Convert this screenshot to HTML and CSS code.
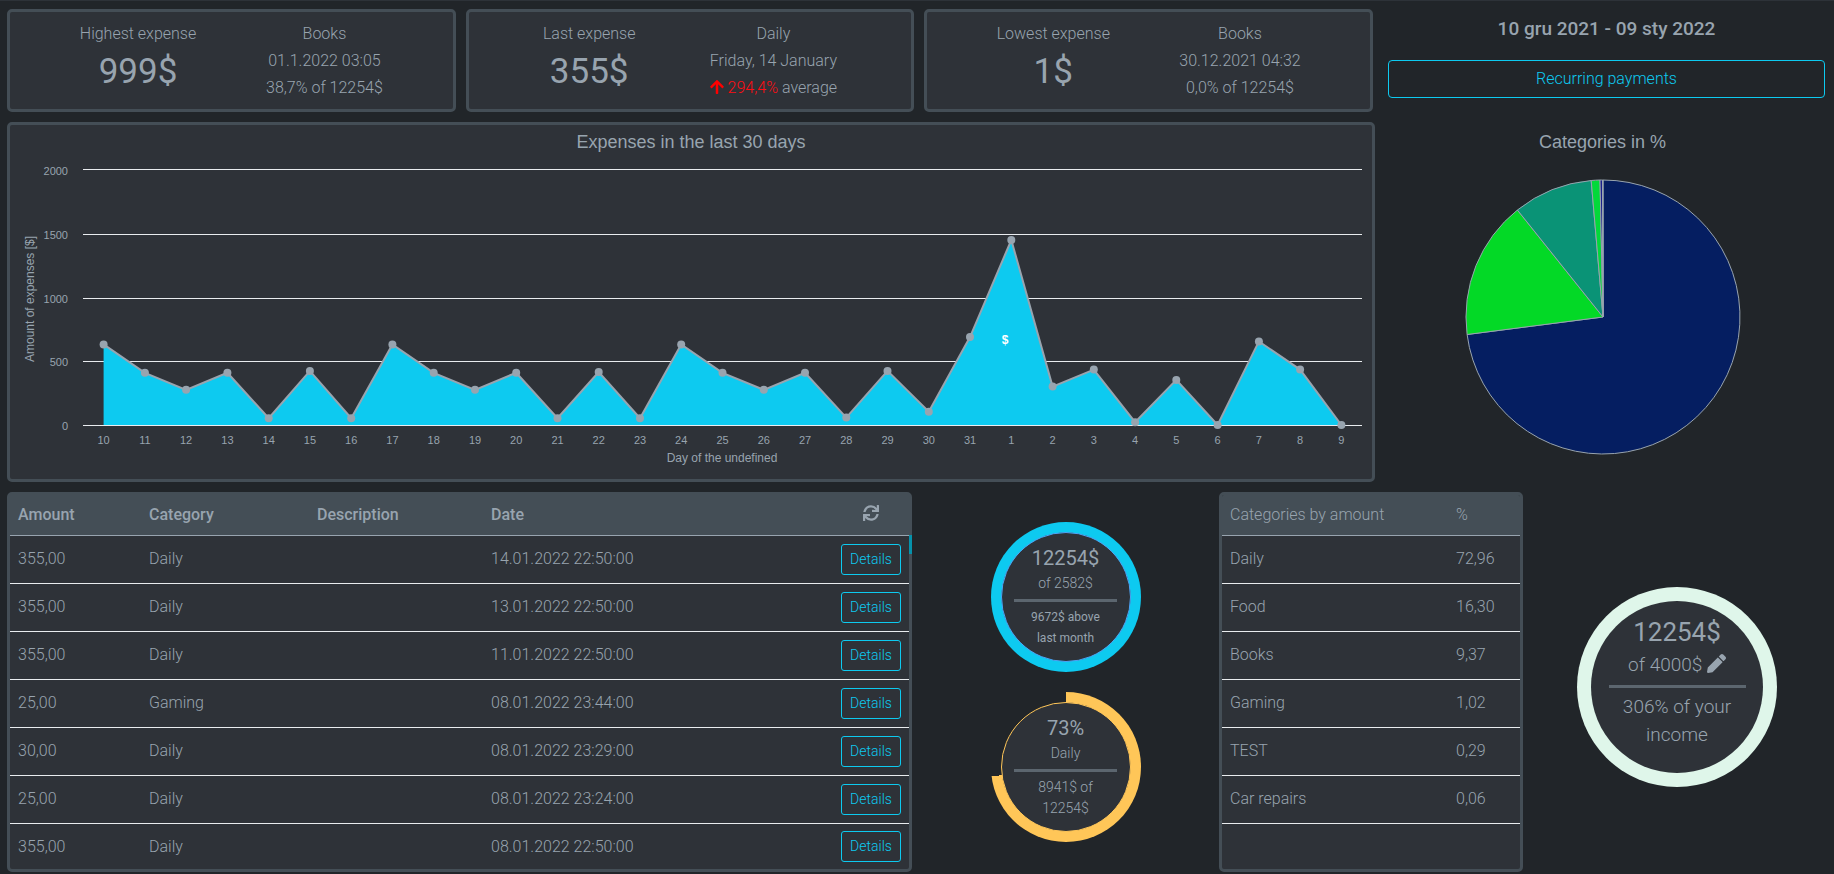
FILE: index.html
```html
<!DOCTYPE html>
<html lang="en">
<head>
<meta charset="utf-8">
<title>Expenses dashboard</title>
<link rel="stylesheet" href="styles.css">
</head>
<body>
<main class="page">
  <div class="top">
    <div class="main-col">
      <div class="stats">
        <section class="panel stat">
          <div class="stat-col"><span>Highest expense</span><strong class="big">999$</strong></div>
          <div class="stat-col"><span>Books</span><span>01.1.2022 03:05</span><span>38,7% of 12254$</span></div>
        </section>
        <section class="panel stat">
          <div class="stat-col"><span>Last expense</span><strong class="big">355$</strong></div>
          <div class="stat-col"><span>Daily</span><span>Friday, 14 January</span><span><span class="up"><svg class="arrow" viewBox="0 0 448 512" aria-hidden="true"><path d="M34.900 289.500l-22.200-22.200c-9.400-9.400-9.400-24.600 0-33.900L207 39c9.400-9.400 24.600-9.400 33.900 0l194.300 194.300c9.400 9.400 9.400 24.600 0 33.900L413 289.400c-9.500 9.500-25 9.300-34.300-.4L264 168.600V456c0 13.300-10.700 24-24 24h-32c-13.300 0-24-10.700-24-24V168.600L69.200 289.100c-9.300 9.800-24.800 10-34.300.4z"/></svg> 294,4%</span> average</span></div>
        </section>
        <section class="panel stat">
          <div class="stat-col"><span>Lowest expense</span><strong class="big">1$</strong></div>
          <div class="stat-col"><span>Books</span><span>30.12.2021 04:32</span><span>0,0% of 12254$</span></div>
        </section>
      </div>
      <section class="panel chart">
        <h2 class="chart-title">Expenses in the last 30 days</h2>
        <svg class="area" viewBox="0 0 1362 319" role="img" aria-label="Expenses in the last 30 days">
          <g class="grid">
            <path d="M73 9.500H1352M73 74.500H1352M73 138.500H1352M73 201.500H1352M73 265.500H1352"/>
          </g>
          <g class="ticks ticks-y">
            <text x="58" y="15">2000</text><text x="58" y="79">1500</text><text x="58" y="143">1000</text><text x="58" y="206">500</text><text x="58" y="270">0</text>
          </g>
          <polygon class="fill" id="fill"/>
          <path class="base" d="M73 265.500H1352"/>
          <polyline class="line" id="line"/>
          <g class="dots" id="dots"></g>
          <g class="ticks" id="days"></g>
          <text class="mark" x="995" y="184">$</text>
          <text class="axis" x="712" y="302">Day of the undefined</text>
          <text class="axis" x="-139" y="24" transform="rotate(-90)">Amount of expenses [$]</text>
        </svg>
      </section>
    </div>
    <aside class="side-col">
      <h1 class="period">10 gru 2021 - 09 sty 2022</h1>
      <button class="btn btn-wide" type="button">Recurring payments</button>
      <section class="pie-box">
        <h2 class="chart-title">Categories in %</h2>
        <svg class="pie" viewBox="-138 -138 276 276" role="img" aria-label="Categories in %">
          <path fill="#051e61" d="M0 0V-137A137 137 0 1 1 -135.900 17.500Z"/>
          <path fill="#03d926" d="M0 0L-135.900 17.500A137 137 0 0 1 -85.600 -107Z"/>
          <path fill="#0a9376" d="M0 0L-85.600 -107A137 137 0 0 1 -11.800 -136.500Z"/>
          <path fill="#03d93a" d="M0 0L-11.800 -136.500A137 137 0 0 1 -3 -137Z"/>
          <path fill="#1a1f8c" d="M0 0L-3 -137A137 137 0 0 1 -.500 -137Z"/>
          <path fill="#98a4af" d="M0 0L-.500 -137H0Z"/>
        </svg>
      </section>
    </aside>
  </div>

  <div class="bottom">
    <section class="panel list">
      <table class="table">
        <colgroup><col class="c-amount"><col class="c-category"><col class="c-desc"><col><col class="c-action"></colgroup>
        <thead><tr><th>Amount</th><th>Category</th><th>Description</th><th>Date</th><th class="action"><button class="icon-btn" type="button" aria-label="Refresh"><svg class="refresh" viewBox="0 0 512 512" aria-hidden="true"><path d="M440.650 12.570l4 82.770A247.160 247.160 0 0 0 255.830 8C134.730 8 33.910 94.920 12.290 209.820A12 12 0 0 0 24.090 224h49.050a12 12 0 0 0 11.670-9.260 175.910 175.910 0 0 1 317-56.940l-101.460-4.860a12 12 0 0 0-12.570 12v47.410a12 12 0 0 0 12 12H500a12 12 0 0 0 12-12V12a12 12 0 0 0-12-12h-47.370a12 12 0 0 0-11.980 12.570zM255.830 432a175.610 175.610 0 0 1-146-77.800l101.800 4.870a12 12 0 0 0 12.570-12v-47.400a12 12 0 0 0-12-12H12a12 12 0 0 0-12 12V500a12 12 0 0 0 12 12h47.350a12 12 0 0 0 12-12.600l-4.150-82.570A247.170 247.170 0 0 0 255.830 504c121.110 0 221.930-86.920 243.550-201.820a12 12 0 0 0-11.800-14.180h-49.050a12 12 0 0 0-11.670 9.260A175.860 175.860 0 0 1 255.830 432z"/></svg></button></th></tr></thead>
        <tbody>
          <tr><td>355,00</td><td>Daily</td><td></td><td>14.01.2022 22:50:00</td><td class="action"><button class="btn" type="button">Details</button></td></tr>
          <tr><td>355,00</td><td>Daily</td><td></td><td>13.01.2022 22:50:00</td><td class="action"><button class="btn" type="button">Details</button></td></tr>
          <tr><td>355,00</td><td>Daily</td><td></td><td>11.01.2022 22:50:00</td><td class="action"><button class="btn" type="button">Details</button></td></tr>
          <tr><td>25,00</td><td>Gaming</td><td></td><td>08.01.2022 23:44:00</td><td class="action"><button class="btn" type="button">Details</button></td></tr>
          <tr><td>30,00</td><td>Daily</td><td></td><td>08.01.2022 23:29:00</td><td class="action"><button class="btn" type="button">Details</button></td></tr>
          <tr><td>25,00</td><td>Daily</td><td></td><td>08.01.2022 23:24:00</td><td class="action"><button class="btn" type="button">Details</button></td></tr>
          <tr><td>355,00</td><td>Daily</td><td></td><td>08.01.2022 22:50:00</td><td class="action"><button class="btn" type="button">Details</button></td></tr>
        </tbody>
      </table>
      <span class="thumb"></span>
    </section>

    <div class="rings">
      <div class="ring ring-cyan"><div class="disc">
        <strong class="ring-value">12254$</strong><span class="ring-sub">of 2582$</span>
        <hr class="rule"><p class="ring-note small">9672$ above<br>last month</p>
      </div></div>
      <div class="ring ring-yellow"><div class="disc">
        <strong class="ring-value">73%</strong><span class="ring-sub">Daily</span>
        <hr class="rule"><p class="ring-note">8941$ of<br>12254$</p>
      </div></div>
    </div>

    <section class="panel cats">
      <table class="table">
        <colgroup><col><col class="c-percent"></colgroup>
        <thead><tr><th class="light">Categories by amount</th><th class="light">%</th></tr></thead>
        <tbody>
          <tr><td>Daily</td><td>72,96</td></tr>
          <tr><td>Food</td><td>16,30</td></tr>
          <tr><td>Books</td><td>9,37</td></tr>
          <tr><td>Gaming</td><td>1,02</td></tr>
          <tr><td>TEST</td><td>0,29</td></tr>
          <tr><td>Car repairs</td><td>0,06</td></tr>
        </tbody>
      </table>
    </section>

    <div class="rings income">
      <div class="ring ring-mint"><div class="disc">
        <strong class="ring-value">12254$</strong>
        <span class="ring-sub">of 4000$ <button class="icon-btn" type="button" aria-label="Edit income"><svg class="pencil" viewBox="0 0 512 512" aria-hidden="true"><path d="M497.900 142.100l-46.100 46.100c-4.700 4.700-12.300 4.700-17 0l-111-111c-4.700-4.700-4.700-12.300 0-17l46.100-46.100c18.700-18.700 49.100-18.700 67.900 0l60.100 60.100c18.800 18.700 18.800 49.100 0 67.900zM284.200 99.800L21.600 362.400.4 483.900c-2.900 16.400 11.400 30.600 27.800 27.800l121.500-21.300 262.600-262.600c4.700-4.700 4.700-12.300 0-17l-111-111c-4.800-4.700-12.400-4.700-17.100 0z"/></svg></button></span>
        <hr class="rule"><p class="ring-note">306% of your<br>income</p>
      </div></div>
    </div>
  </div>
</main>
<script src="chart.js"></script>
</body>
</html>
```
FILE: chart.js
```js
const expenses = [
  [10, 630], [11, 408], [12, 275], [13, 408], [14, 53], [15, 423], [16, 53], [17, 630],
  [18, 408], [19, 275], [20, 408], [21, 53], [22, 413], [23, 53], [24, 630], [25, 408],
  [26, 275], [27, 408], [28, 58], [29, 423], [30, 104], [31, 687], [1, 1445], [2, 300],
  [3, 433], [4, 22], [5, 352], [6, 0], [7, 653], [8, 433], [9, 0]
];
const left = 73, right = 1352, base = 265, top0 = 9, max = 2000;
const step = (right - left) / expenses.length;
const points = expenses.map(([, v], i) => [
  left + step * (i + 0.5),
  base - v * (base - top0) / max
]);
const join = list => list.map(p => p.map(n => n.toFixed(1)).join(",")).join(" ");
const first = points[0][0], last = points[points.length - 1][0];

document.getElementById("line").setAttribute("points", join(points));
document.getElementById("fill").setAttribute("points", join([[first, base], ...points, [last, base]]));

const make = (parent, name, attrs, text) => {
  const node = document.createElementNS("http://www.w3.org/2000/svg", name);
  Object.entries(attrs).forEach(([k, v]) => node.setAttribute(k, v));
  if (text !== undefined) node.textContent = text;
  document.getElementById(parent).append(node);
};
points.forEach(([x, y], i) => {
  make("dots", "circle", { cx: x.toFixed(1), cy: y.toFixed(1), r: 4 });
  make("days", "text", { x: x.toFixed(1), y: 284 }, expenses[i][0]);
});
```
FILE: styles.css
```css
* { box-sizing: border-box; }

body {
  margin: 0;
  background: #212529;
  color: #98a4af;
  font: 300 16px/27px Roboto, "Liberation Sans", sans-serif;
}

.page {
  border-top: 1px solid #2d3238;
  padding: 8px 0 2px 7px;
  display: flex;
  flex-direction: column;
  gap: 10px;
}

.panel {
  background: #2e3238;
  border: 3px solid #444e56;
  border-radius: 5px;
}

.top {
  display: grid;
  grid-template-columns: 1368fr 437fr;
  gap: 13px;
  padding-right: 9px;
}

.main-col { display: flex; flex-direction: column; gap: 10px; }

.stats {
  display: grid;
  grid-template-columns: repeat(3, 1fr);
  gap: 10px;
  padding-right: 2px;
}

.stat { display: flex; justify-content: space-evenly; padding: 8px 0; }
.stat-col { display: flex; flex-direction: column; align-items: center; }
.big { font-size: 35px; font-weight: 400; line-height: 50px; }
.up { color: #ff0c12; }
.arrow { width: 14px; height: 16px; fill: #ff0000; vertical-align: -2px; }

.chart-title {
  margin: 0;
  font: 400 18px/35px "Liberation Sans", Arial, sans-serif;
  text-align: center;
}

.area {
  display: block;
  width: 100%;
  height: auto;
  font-family: "Liberation Sans", Arial, sans-serif;
  font-weight: 400;
}
.grid, .base { stroke: #e9ecef; stroke-width: 1; fill: none; }
.fill { fill: #0dcaf0; }
.line { fill: none; stroke: #98a4af; stroke-width: 2; }
.dots { fill: #98a4af; }
.ticks { fill: #98a4af; font-size: 11px; text-anchor: middle; }
.ticks-y { text-anchor: end; }
.axis { fill: #98a4af; font-size: 12px; text-anchor: middle; }
.mark { fill: #fff; font-size: 12px; font-weight: 700; text-anchor: middle; }

.side-col { display: flex; flex-direction: column; }
.period {
  margin: 0 0 12px;
  font-size: 19px;
  font-weight: 500;
  line-height: 39px;
  text-align: center;
}

.btn {
  border: 1px solid #0dcaf0;
  border-radius: 3px;
  background: transparent;
  color: #0dcaf0;
  font: 300 14px/21px Roboto, "Liberation Sans", sans-serif;
  padding: 4px 8px;
}
.btn-wide { font-size: 16px; line-height: 24px; padding: 6px 12px; border-radius: 4px; }

.pie-box { display: flex; flex-direction: column; align-items: center; gap: 19px; padding: 27px 8px 0 0; }
.pie { width: 276px; max-width: 100%; stroke: #98a4af; stroke-width: 1; }

.bottom {
  display: grid;
  grid-template-columns: 905fr 307fr 304fr 308fr;
  height: 380px;
  padding-right: 3px;
}

.list, .cats { overflow: hidden; }
.list { position: relative; overflow: visible; }
.thumb { position: absolute; top: 40px; right: -3px; width: 3px; height: 19px; background: #0692ab; }

.table { width: 100%; table-layout: fixed; border-collapse: separate; border-spacing: 0; }
.table th, .table td { height: 48px; padding: 0 8px; border-bottom: 1px solid #e9ecef; text-align: left; }
.table td { padding-bottom: 2px; }
.table th { height: 41px; padding-bottom: 2px; background: #444e56; border-color: #98a4af; font-weight: 500; }
.list tbody tr:last-child td { height: 45px; border-bottom: 0; padding: 0 8px; }
.table .light { font-weight: 300; }
.table .action, .list tbody tr:last-child .action { text-align: center; padding: 0; }
.c-amount { width: 131px; }
.c-category { width: 168px; }
.c-desc { width: 174px; }
.c-action { width: 76px; }
.c-percent { width: 72px; }

.icon-btn { border: 0; padding: 0; background: none; line-height: 0; }
.icon-btn svg { fill: #98a4af; }
.refresh { width: 16px; height: 16px; }
.pencil { width: 19px; height: 19px; vertical-align: -2px; }

.rings { display: flex; flex-direction: column; align-items: center; justify-content: center; gap: 20px; }
.income { padding-top: 10px; }
.ring { width: 150px; height: 150px; padding: 10px; border-radius: 50%; }
.disc {
  height: 100%;
  border: 1px solid transparent;
  border-radius: 50%;
  background: #2e3238;
  display: flex;
  flex-direction: column;
  align-items: center;
  padding-top: 12px;
}
.ring-cyan { background: #0dcaf0; }
.ring-cyan .disc { border-color: #4da3f5; }
.ring-yellow { background: conic-gradient(#ffc658 0 73%, transparent 73%); }
.ring-yellow .disc { border-color: #ffc658; }
.ring-value { font-size: 20px; font-weight: 400; line-height: 26px; }
.ring-sub { font-size: 14px; line-height: 24px; }
.rule { width: 103px; height: 3px; margin: 4px 0 5px; border: 0; background: #5c666f; }
.ring-note { margin: 0; font-size: 14px; line-height: 21px; text-align: center; }
.small { font-size: 12px; font-weight: 400; }

.ring-mint { width: 200px; height: 200px; padding: 14px; background: #dff6ea; }
.ring-mint .disc { border: 0; padding-top: 15px; }
.ring-mint .ring-value { font-size: 26px; line-height: 32px; }
.ring-mint .ring-sub { font-size: 19px; line-height: 34px; }
.ring-mint .rule { width: 137px; margin: 3px 0 5px; }
.ring-mint .ring-note { font-size: 19px; line-height: 28px; }
```
